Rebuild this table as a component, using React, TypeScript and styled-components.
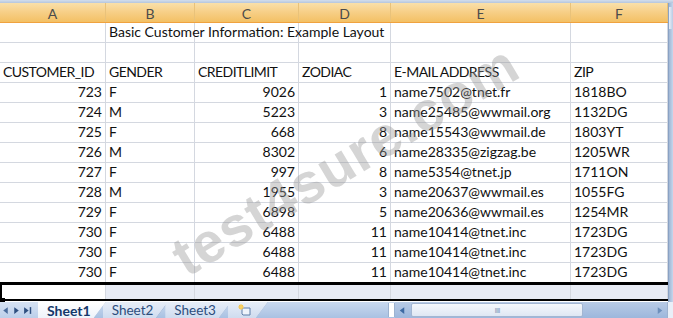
import styled, { createGlobalStyle } from 'styled-components';

const GlobalStyle = createGlobalStyle`
  html, body { margin: 0; padding: 0; background: #ffffff; }
  body { font-family: Lato, "Liberation Sans", sans-serif; }
`;

const COLUMNS = ['A', 'B', 'C', 'D', 'E', 'F'];
const TEMPLATE = '106px 89px 104px 92px 180px 97px';

type Row = [string, string, string, string, string, string];

const rows: Row[] = [
  ['723', 'F', '9026', '1', 'name7502@tnet.fr', '1818BO'],
  ['724', 'M', '5223', '3', 'name25485@wwmail.org', '1132DG'],
  ['725', 'F', '668', '8', 'name15543@wwmail.de', '1803YT'],
  ['726', 'M', '8302', '6', 'name28335@zigzag.be', '1205WR'],
  ['727', 'F', '997', '8', 'name5354@tnet.jp', '1711ON'],
  ['728', 'M', '1955', '3', 'name20637@wwmail.es', '1055FG'],
  ['729', 'F', '6898', '5', 'name20636@wwmail.es', '1254MR'],
  ['730', 'F', '6488', '11', 'name10414@tnet.inc', '1723DG'],
  ['730', 'F', '6488', '11', 'name10414@tnet.inc', '1723DG'],
  ['730', 'F', '6488', '11', 'name10414@tnet.inc', '1723DG'],
];

const numeric = [true, false, true, true, false, false];

const headers = ['CUSTOMER_ID', 'GENDER', 'CREDITLIMIT', 'ZODIAC', 'E-MAIL ADDRESS', 'ZIP'];

const App = () => {
  return (
    <>
      <GlobalStyle />
      <Frame>
        <TopEdge />
        <SheetArea>
          <Sheet>
            <GridRow $header>
              {COLUMNS.map((c) => (
                <HeaderCell key={c}>{c}</HeaderCell>
              ))}
            </GridRow>
            <GridRow>
              <Cell />
              <Cell $overflow>Basic Customer Information: Example Layout</Cell>
              <Cell />
              <Cell />
              <Cell />
              <Cell />
            </GridRow>
            <GridRow>
              {COLUMNS.map((c) => (
                <Cell key={c} />
              ))}
            </GridRow>
            <GridRow>
              {headers.map((h) => (
                <Cell key={h} $caps>
                  {h}
                </Cell>
              ))}
            </GridRow>
            {rows.map((r, i) => (
              <GridRow key={i}>
                {r.map((v, j) => (
                  <Cell key={j} $right={numeric[j]}>
                    {v}
                  </Cell>
                ))}
              </GridRow>
            ))}
            <SelectedRow>
              {COLUMNS.map((c, j) => (
                <SelectedCell key={c} $active={j === 0} />
              ))}
              <FillHandle />
            </SelectedRow>
          </Sheet>
          <VScroll>
            <VScrollButton />
          </VScroll>
        </SheetArea>
        <TabBar>
          <TabNav>
            <NavArrow viewBox="0 0 8 8">
              <path d="M6 1 L2 4 L6 7 Z" fill="#4a6c9c" />
            </NavArrow>
            <NavArrow viewBox="0 0 8 8">
              <path d="M2 1 L6 4 L2 7 Z" fill="#2e4f80" />
            </NavArrow>
            <NavArrow viewBox="0 0 8 8">
              <path d="M1 1 L5 4 L1 7 Z" fill="#2e4f80" />
              <rect x="6" y="1" width="1.3" height="6" fill="#2e4f80" />
            </NavArrow>
          </TabNav>
          <Tab $active>Sheet1</Tab>
          <Tab>Sheet2</Tab>
          <Tab>Sheet3</Tab>
          <Tab>
            <svg width="16" height="13" viewBox="0 0 16 13">
              <path d="M5 4 H13 V11 H6 L5 10 Z" fill="#eef3fa" stroke="#5f7fa9" strokeWidth="1" />
              <circle cx="4" cy="3" r="2.4" fill="#f3c24a" />
              <path d="M4 0 V6 M1 3 H7" stroke="#f7d97a" strokeWidth="0.8" />
            </svg>
          </Tab>
          <TabFill />
          <Splitter />
          <HScroll>
            <ScrollArrow viewBox="0 0 8 8">
              <path d="M6 1 L2 4 L6 7 Z" fill="#3d6aa3" />
            </ScrollArrow>
            <Thumb>
              <Grip>IIII</Grip>
            </Thumb>
            <Track />
            <ScrollArrow viewBox="0 0 8 8">
              <path d="M2 1 L6 4 L2 7 Z" fill="#6d8fbc" />
            </ScrollArrow>
          </HScroll>
          <EndCap />
        </TabBar>
        <Watermark>test4sure.com</Watermark>
      </Frame>
    </>
  );
};

export default App;

const Frame = styled.div`
  position: relative;
  width: 673px;
  height: 318px;
  overflow: hidden;
  display: flex;
  flex-direction: column;
  background: #ffffff;
`;

const TopEdge = styled.div`
  height: 3px;
  background: linear-gradient(#d3deec, #b5c6dd);
`;

const SheetArea = styled.div`
  display: flex;
  flex: 1;
  min-height: 0;
`;

const Sheet = styled.div`
  width: 668px;
  display: flex;
  flex-direction: column;
`;

const GridRow = styled.div<{ $header?: boolean }>`
  display: grid;
  grid-template-columns: ${TEMPLATE};
  height: 20px;
  ${(p) => p.$header && 'border-bottom: 1px solid #f0a23e; height: 19px;'}
`;

const HeaderCell = styled.div`
  display: flex;
  align-items: center;
  justify-content: center;
  background: linear-gradient(#f9e0aa, #f7d089 45%, #f3c064);
  border-right: 1px solid #e9c27a;
  color: #4b4b4b;
  font-size: 14px;
  padding-top: 1px;
`;

const Cell = styled.div<{ $right?: boolean; $overflow?: boolean; $caps?: boolean }>`
  display: flex;
  align-items: flex-end;
  justify-content: ${(p) => (p.$right ? 'flex-end' : 'flex-start')};
  padding: 0 3px 2px 3px;
  border-right: 1px solid #d4d8e0;
  border-bottom: 1px solid #d4d8e0;
  font-size: 14px;
  letter-spacing: ${(p) => (p.$caps ? '-0.55px' : '0')};
  color: #111111;
  white-space: nowrap;
  overflow: ${(p) => (p.$overflow ? 'visible' : 'hidden')};
  position: ${(p) => (p.$overflow ? 'relative' : 'static')};
  z-index: ${(p) => (p.$overflow ? 1 : 0)};
  min-width: 0;
`;

const SelectedRow = styled.div`
  position: relative;
  display: grid;
  margin-top: -1px;
  height: 19px;
  border-top: 3px solid #000000;
  border-bottom: 2px solid #000000;
  border-left: 2px solid #000000;
  box-sizing: border-box;
  grid-template-columns: 104px 89px 104px 92px 180px 97px;
`;

const SelectedCell = styled.div<{ $active?: boolean }>`
  background: ${(p) => (p.$active ? '#ffffff' : '#e8ecf5')};
  border-right: 1px solid #d4d8e0;
`;

const FillHandle = styled.div`
  position: absolute;
  left: -2px;
  bottom: -3px;
  width: 5px;
  height: 4px;
  background: #000000;
`;

const VScroll = styled.div`
  width: 5px;
  background: linear-gradient(90deg, #9fb6d4, #c6d6ec);
  border-left: 1px solid #8aa2c4;
  box-sizing: border-box;
`;

const VScrollButton = styled.div`
  height: 22px;
  margin-top: 4px;
  background: linear-gradient(90deg, #e9eff8, #b9cbe4);
`;

const TabBar = styled.div`
  height: 16px;
  display: flex;
  align-items: stretch;
  background: linear-gradient(#c9d9ef, #a9c1e2);
  font-size: 13px;
`;

const TabNav = styled.div`
  width: 38px;
  display: flex;
  align-items: center;
  gap: 2px;
  padding-left: 1px;
  box-sizing: border-box;
  background: linear-gradient(#d6e2f3, #bccfea);
`;

const NavArrow = styled.svg`
  width: 9px;
  height: 9px;
`;

const Tab = styled.div<{ $active?: boolean }>`
  position: relative;
  display: flex;
  align-items: center;
  padding: 0 17px 0 9px;
  margin-right: -5px;
  color: ${(p) => (p.$active ? '#15386a' : '#2c4d7c')};
  font-weight: ${(p) => (p.$active ? 700 : 400)};
  font-size: ${(p) => (p.$active ? '14px' : '13.5px')};
  background: ${(p) => (p.$active ? 'linear-gradient(#ffffff, #eef3fa)' : 'linear-gradient(#e7eef8, #cfdcef)')};
  clip-path: polygon(0 0, calc(100% - 2px) 0, calc(100% - 14px) 100%, 0 100%);
  z-index: ${(p) => (p.$active ? 2 : 1)};

  &::after {
    content: '';
    position: absolute;
    right: 7px;
    top: -2px;
    width: 1px;
    height: 20px;
    background: #8fa7c9;
    transform: rotate(37deg);
  }
`;

const TabFill = styled.div`
  flex: 1;
`;

const Splitter = styled.div`
  width: 5px;
  margin: 1px 0;
  background: #ffffff;
  border-left: 1px solid #9cb2d0;
  border-right: 1px solid #9cb2d0;
`;

const HScroll = styled.div`
  width: 272px;
  display: flex;
  align-items: center;
  background: linear-gradient(#b8cbe6, #9db7dc);
`;

const ScrollArrow = styled.svg`
  width: 14px;
  height: 9px;
`;

const Thumb = styled.div`
  width: 172px;
  height: 14px;
  margin-left: 2px;
  display: flex;
  align-items: center;
  justify-content: center;
  border: 1px solid #a3b6d2;
  border-radius: 2px;
  box-sizing: border-box;
  background: linear-gradient(#f5f8fc, #dfe7f3);
`;

const Grip = styled.span`
  font-size: 8px;
  color: #8da2c2;
  letter-spacing: -1px;
  font-family: "Liberation Sans", sans-serif;
`;

const Track = styled.div`
  flex: 1;
`;

const EndCap = styled.div`
  width: 5px;
  background: #e9eff8;
  border-left: 1px solid #9cb2d0;
`;

const Watermark = styled.div`
  position: absolute;
  left: 345px;
  top: 160px;
  transform: translate(-50%, -50%) rotate(-31deg);
  font-family: "Liberation Sans", sans-serif;
  font-weight: 700;
  font-size: 56px;
  color: rgba(150, 150, 150, 0.4);
  white-space: nowrap;
  pointer-events: none;
  letter-spacing: 1px;
`;
